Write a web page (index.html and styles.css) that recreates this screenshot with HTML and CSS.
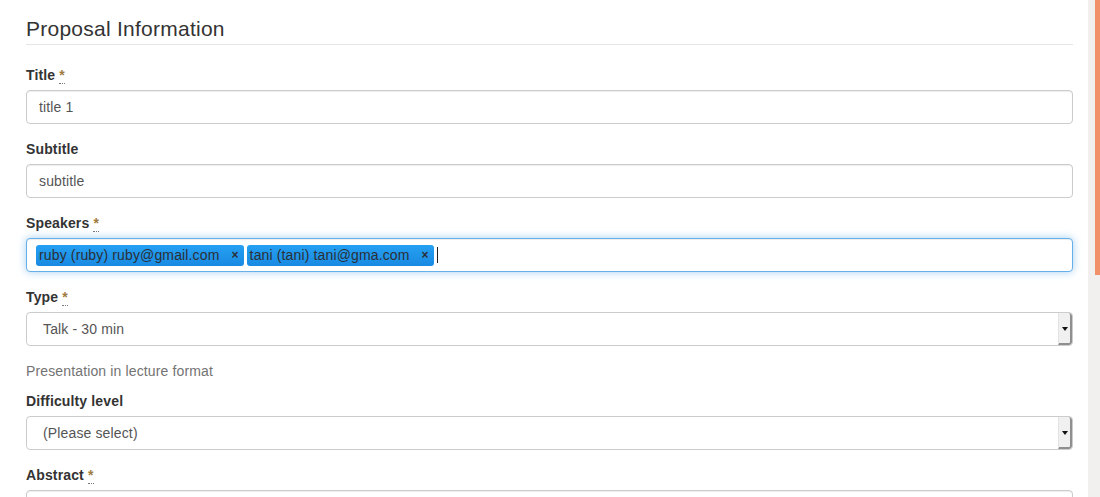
FILE: index.html
```html
<!DOCTYPE html>
<html lang="en">
<head>
<meta charset="utf-8">
<title>Proposal Information</title>
<link rel="stylesheet" href="styles.css">
</head>
<body>
<div class="page">
  <main class="main">
    <form class="form">
      <legend class="legend">Proposal Information</legend>

      <div class="form-group">
        <label class="label">Title <abbr class="req" title="required">*</abbr></label>
        <div class="input">title 1</div>
      </div>

      <div class="form-group">
        <label class="label">Subtitle</label>
        <div class="input">subtitle</div>
      </div>

      <div class="form-group">
        <label class="label">Speakers <abbr class="req" title="required">*</abbr></label>
        <div class="input input-tags focus">
          <span class="tag">ruby (ruby) ruby@gmail.com<span class="tag-x">×</span></span>
          <span class="tag">tani (tani) tani@gma.com<span class="tag-x">×</span></span>
          <span class="caret"></span>
        </div>
      </div>

      <div class="form-group">
        <label class="label">Type <abbr class="req" title="required">*</abbr></label>
        <div class="select">
          <span class="select-text">Talk - 30 min</span>
          <span class="select-btn"><span class="arrow"></span></span>
        </div>
      </div>

      <p class="help">Presentation in lecture format</p>

      <div class="form-group">
        <label class="label">Difficulty level</label>
        <div class="select">
          <span class="select-text">(Please select)</span>
          <span class="select-btn"><span class="arrow"></span></span>
        </div>
      </div>

      <div class="form-group">
        <label class="label">Abstract <abbr class="req" title="required">*</abbr></label>
        <div class="input textarea"></div>
      </div>
    </form>
  </main>
  <aside class="scroll-track"><div class="scroll-thumb"></div></aside>
</div>
</body>
</html>
```

FILE: styles.css
```css
html, body {
  margin: 0;
  padding: 0;
  height: 100%;
  overflow: hidden;
  background: #fff;
}

body {
  font-family: "Liberation Sans", Arial, Helvetica, sans-serif;
  font-size: 14px;
  line-height: 20px;
  letter-spacing: 0.14px;
  color: #333;
}

.page {
  display: flex;
  height: 497px;
}

.main {
  flex: 1;
  padding: 14px 15px 0 26px;
  min-width: 0;
}

.form {
  display: flex;
  flex-direction: column;
}

.legend {
  display: block;
  font-size: 21px;
  line-height: 30px;
  letter-spacing: 0.25px;
  color: #333;
  border-bottom: 1px solid #e5e5e5;
  margin: 0 0 20px;
  padding: 0;
}

.form-group {
  display: flex;
  flex-direction: column;
  margin-bottom: 15px;
}

.label {
  font-weight: bold;
  margin-bottom: 5px;
  line-height: 20px;
}

.req {
  text-decoration: none;
  border-bottom: 1px dotted #777;
  color: #a07c3e;
  font-weight: bold;
  cursor: help;
}

.input {
  box-sizing: border-box;
  height: 34px;
  padding: 6px 12px;
  border: 1px solid #ccc;
  border-radius: 4px;
  box-shadow: inset 0 1px 1px rgba(0, 0, 0, 0.075);
  color: #555;
  line-height: 20px;
  background: #fff;
}

.input.focus {
  border-color: #66afe9;
  box-shadow: inset 0 1px 1px rgba(0, 0, 0, 0.075), 0 0 8px rgba(102, 175, 233, 0.6);
}

.input-tags {
  display: flex;
  align-items: center;
  padding: 0 9px;
  gap: 3px;
}

.tag {
  display: inline-flex;
  align-items: center;
  height: 21px;
  padding: 0 5px 0 3px;
  border-radius: 3px;
  background: linear-gradient(#25a0f2, #1a8ae2);
  color: #2a2f36;
  line-height: 21px;
}

.tag-x {
  margin-left: 12px;
  font-size: 12px;
  font-weight: bold;
  color: #2a2f36;
}

.caret {
  display: inline-block;
  width: 1px;
  height: 16px;
  background: #222;
  margin-left: 0;
}

.select {
  box-sizing: border-box;
  height: 34px;
  display: flex;
  align-items: stretch;
  border: 1px solid #ccc;
  border-radius: 4px;
  background: #fff;
  color: #555;
  overflow: hidden;
}

.select-text {
  flex: 1;
  padding: 6px 12px 6px 16px;
  line-height: 20px;
}

.select-btn {
  width: 11px;
  display: flex;
  align-items: center;
  justify-content: center;
  background: #f0f0f0;
  border-left: 1px solid #e2e2e2;
  border-right: 2px solid #8f8f8f;
  border-bottom: 2px solid #8f8f8f;
  border-radius: 0 3px 3px 0;
}

.arrow {
  width: 0;
  height: 0;
  border-left: 3px solid transparent;
  border-right: 3px solid transparent;
  border-top: 4px solid #111;
  margin-top: 2px;
}

.help {
  margin: 0 0 10px;
  color: #737373;
  line-height: 20px;
}

.textarea {
  height: 60px;
}

.scroll-track {
  width: 12px;
  height: 497px;
  background: #f1f0ee;
  flex: none;
}

.scroll-thumb {
  margin-left: 7px;
  width: 5px;
  height: 275px;
  background: #f0916a;
}
```
